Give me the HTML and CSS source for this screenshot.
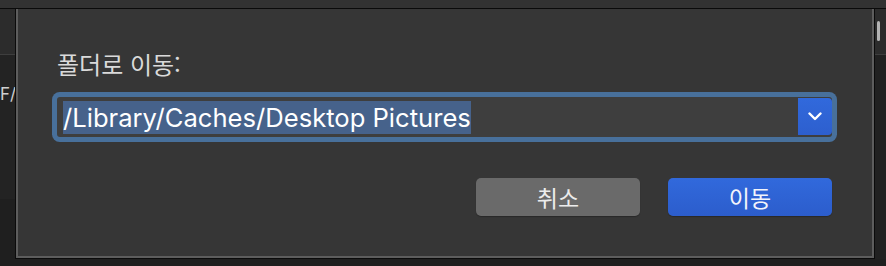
FILE: index.html
```html
<!DOCTYPE html>
<html lang="ko">
<head>
  <meta charset="UTF-8">
  <title>폴더로 이동</title>
  <link rel="stylesheet" href="styles.css">
</head>
<body>
  <div class="toolbar"></div>
  <div class="workspace">
    <div class="side side-left">
      <div class="side-head"></div>
      <div class="side-body"><span class="side-text">F/</span></div>
    </div>
    <div class="dialog">
      <div class="dialog-inner">
        <label class="field-label" for="path">폴더로 이동:</label>
        <div class="path-field">
          <div class="path-input" id="path"><span class="path-sel">/Library/Caches/Desktop Pictures</span></div>
          <button class="path-menu" type="button" aria-label="최근 폴더">
            <svg width="14" height="9" viewBox="0 0 14 9"><path d="M1.5 1.5 L7 7 L12.5 1.5" fill="none" stroke="#fff" stroke-width="2.4" stroke-linecap="round" stroke-linejoin="round"/></svg>
          </button>
        </div>
        <div class="actions">
          <button class="btn btn-cancel" type="button">취소</button>
          <button class="btn btn-go" type="button">이동</button>
        </div>
      </div>
    </div>
    <div class="side side-right">
      <div class="side-head"><span class="thumb"></span></div>
      <div class="side-body"></div>
    </div>
  </div>
</body>
</html>
```

FILE: styles.css
```css
body { margin: 0; background: #1f1f1f; font-family: "Noto Sans CJK KR", "Inter", sans-serif; overflow: hidden;}
.toolbar { height: 8px; background: #323232; border-bottom: 1px solid #0a0a0a;}
.workspace { display: grid; grid-template-columns: 15px 860px 11px; height: 250px;}
.side { display: flex; flex-direction: column;}
.side-head { height: 45px; background: #2c2c2c; border-bottom: 1px solid #3e3e3e; position: relative;}
.side-body { height: 144px; background: #232323; overflow: hidden;}
.side-text { display: block; margin-top: 29px; font-family: "Inter", sans-serif; font-size: 17px; line-height: 20px; color: #cfcfcf; white-space: nowrap;}
.side-right .side-body { height: 204px; background: #212121;}
.thumb { position: absolute; left: 2px; top: 12px; width: 3px; height: 20px; border-radius: 2px; background: #b4b4b4;}
.dialog { border: 1px solid #0b0b0b; border-top: 0;}
.dialog-inner { box-sizing: border-box; height: 249px; border: 2px solid #5d5d5d; border-top: 0; background: #363636; padding: 41px 40px 40px 39px; display: flex; flex-direction: column;}
.field-label { display: block; font-size: 24px; line-height: 28px; color: #dadada;}
.path-field { display: flex; margin-top: 19px; height: 40px; border-radius: 3px; box-shadow: 0 0 0 5px #48709b; background: #3e3e3e;}
.path-input { flex: 1; display: flex; align-items: center; padding-left: 6px;}
.path-sel { font-family: "Inter", sans-serif; font-size: 25.6px; line-height: 33px; color: #fff; background: #46628b; white-space: nowrap;}
.path-menu { width: 34px; margin: 1px 0 2px; padding: 0; border: 0; border-radius: 0 4px 4px 0; background: linear-gradient(#3169dc, #2d5fce); display: flex; align-items: center; justify-content: center;}
.actions { display: flex; justify-content: flex-end; gap: 28px; margin-top: 41px;}
.btn { width: 164px; height: 38px; border: 0; border-radius: 5px; font-family: "Noto Sans CJK KR", sans-serif; font-size: 23px; line-height: 38px; color: #ececec; padding: 0; box-shadow: 0 1px 1px rgba(0,0,0,0.25);}
.btn-cancel { background: #6a6a6a;}
.btn-go { background: linear-gradient(#3169dc, #2c5dcc); color: #f2f4fb;}
```
